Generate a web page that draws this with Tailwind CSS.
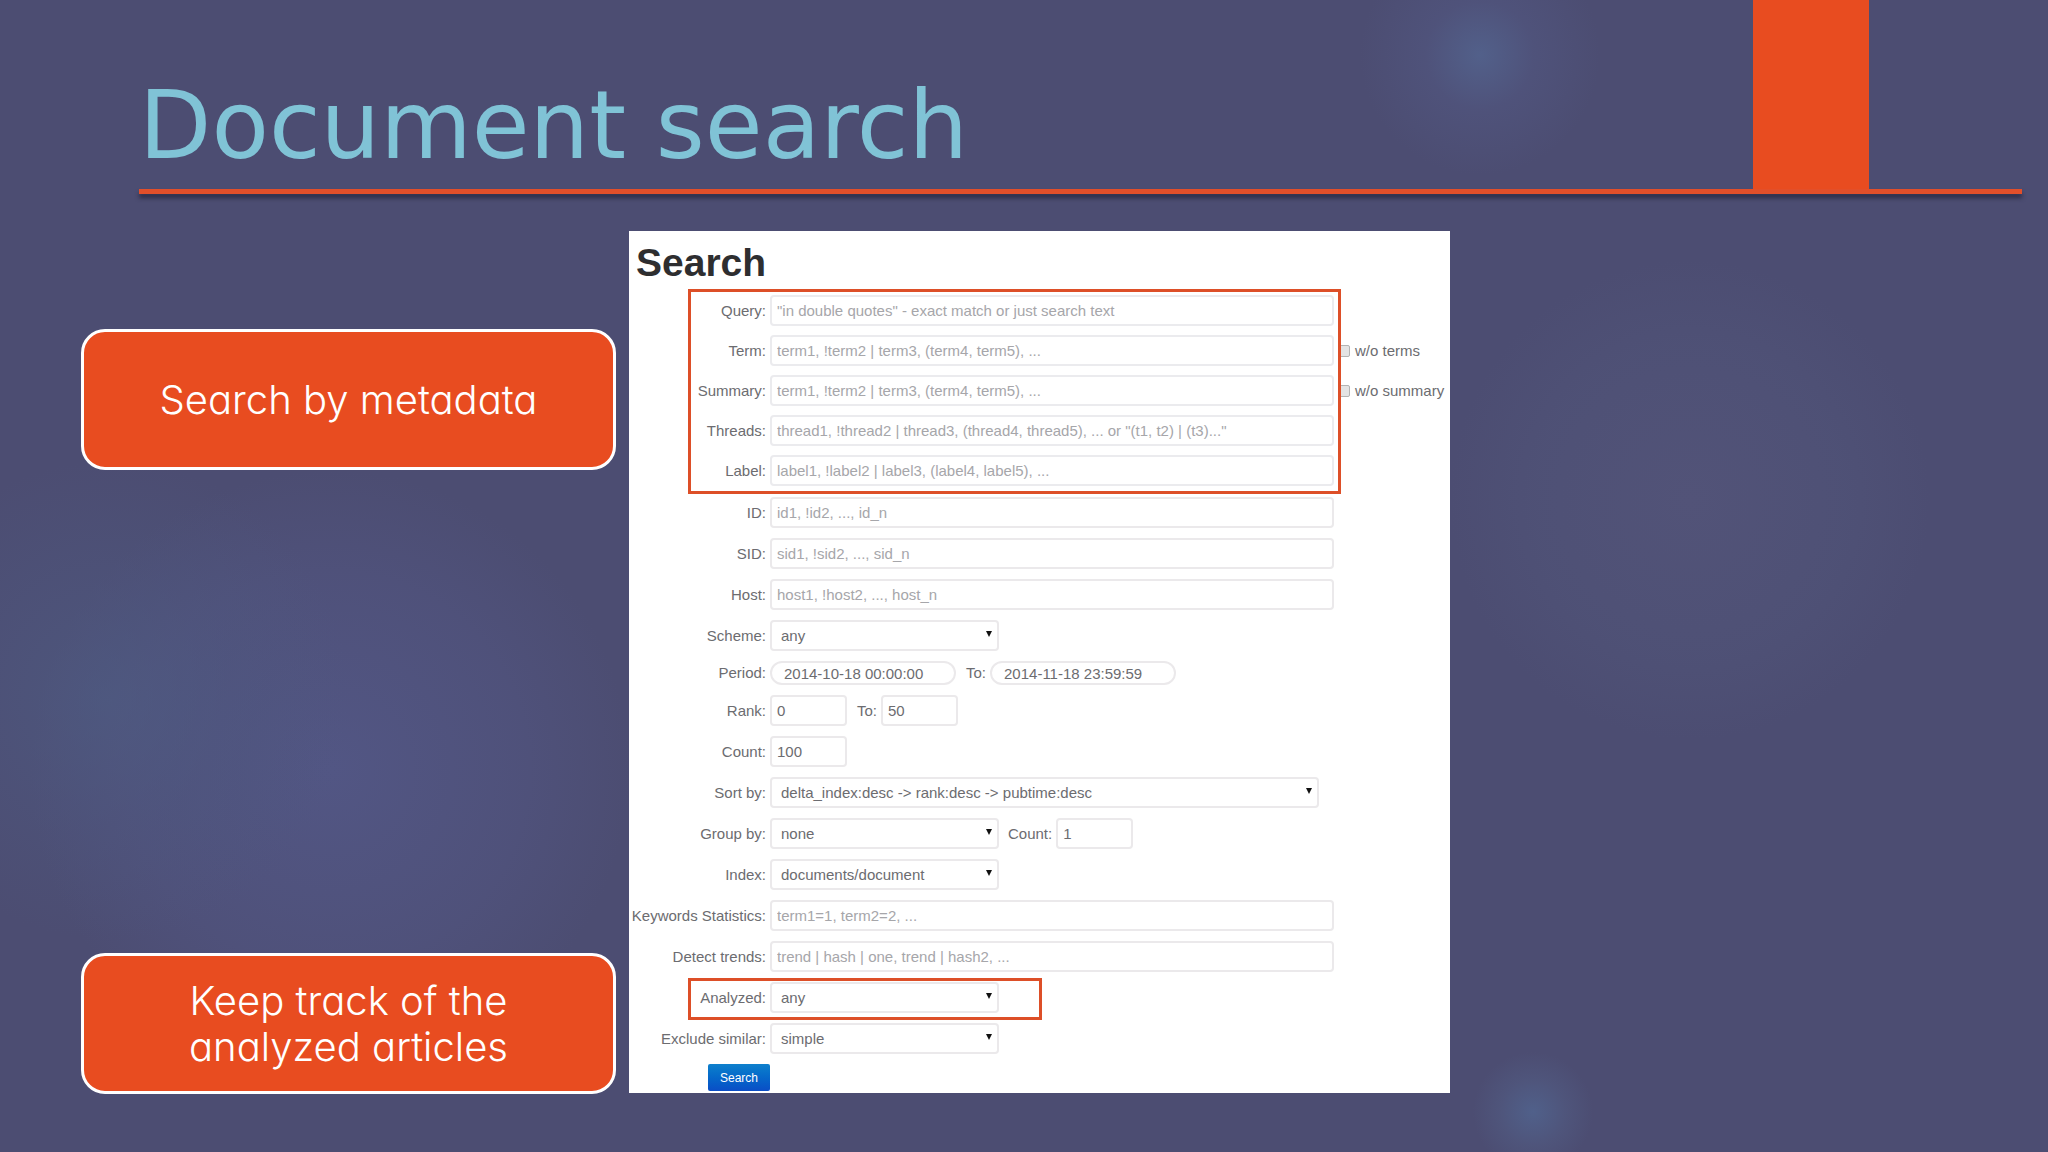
<!DOCTYPE html>
<html lang="en">
<head>
  <meta charset="UTF-8" />
  <meta name="viewport" content="width=device-width, initial-scale=1.0" />
  <title>Document search</title>
  <script src="https://cdn.jsdelivr.net/npm/@tailwindcss/browser@4"></script>
  <style>
    body {
      background-color: #4c4d72;
      background-image:
        radial-gradient(circle 120px at 1480px 55px, #52608a 0, #51568099 45%, transparent 100%),
        radial-gradient(circle 60px at 1533px 1112px, #50608a 0, #50587fb3 55%, transparent 100%),
        radial-gradient(circle 240px at 1690px 500px, #525378 0, #50537899 65%, transparent 100%),
        radial-gradient(circle 240px at 110px 700px, #4e5d8499 0, #4e588066 50%, transparent 100%),
        radial-gradient(circle 300px at 330px 770px, #525684 0, #51548099 65%, transparent 100%);
      background-repeat: no-repeat;
    }
  </style>
</head>
<body class="min-h-screen font-['Liberation_Sans',Arial,sans-serif]">

<header class="ml-[139px] mr-[26px]">
  <div class="flex">
    <h1 class="flex-1 pt-[70px] pb-[7px] text-[94px] leading-[112px] text-[#80c3d6] font-['DejaVu_Sans',Verdana,sans-serif]">Document search</h1>
    <div class="mr-[153px] w-[116px] bg-[#e84c20]"></div>
  </div>
  <div class="h-[5px] bg-[#e24f2a] shadow-[0_4px_4px_rgba(30,30,50,0.7)]"></div>
</header>

<main class="mt-[37px] grid grid-cols-[535fr_821fr_585fr] gap-x-[13px] pl-[81px]">
  <aside class="-mb-px flex flex-col justify-between pt-[98px] text-center text-[40px] leading-[46px] font-light text-white font-[Inter,'Century_Gothic',sans-serif] [font-feature-settings:'cv11']">
    <p class="flex min-h-[141px] items-center justify-center rounded-3xl border-[3px] border-white bg-[#e84c20] px-16">Search by metadata</p>
    <p class="flex min-h-[141px] items-center justify-center rounded-3xl border-[3px] border-white bg-[#e84c20] px-16">Keep track of the<br />analyzed articles</p>
  </aside>

  <form class="bg-white pt-[10px] pb-[2px] text-[15px] leading-[18px] text-[#6c6c70]" onsubmit="return false">
    <h2 class="pl-[7px] text-[39px] leading-[44px] font-bold text-[#2e2e30]">Search</h2>

    <!-- metadata filters -->
    <div class="relative mt-[10px] flex flex-col gap-[9px]">
      <div class="flex items-center gap-1">
        <label for="query" class="w-[137px] shrink-0 text-right">Query:</label>
        <input id="query" type="text" placeholder='"in double quotes" - exact match or just search text' class="h-[31px] min-w-0 flex-1 rounded-sm border-2 border-[#ebebee] px-[5px] placeholder:text-[#a6a6aa]" />
        <div class="w-[112px] shrink-0"></div>
      </div>
      <div class="flex items-center gap-1">
        <label for="term" class="w-[137px] shrink-0 text-right">Term:</label>
        <input id="term" type="text" placeholder="term1, !term2 | term3, (term4, term5), ..." class="h-[31px] min-w-0 flex-1 rounded-sm border-2 border-[#ebebee] px-[5px] placeholder:text-[#a6a6aa]" />
        <label class="flex w-[112px] shrink-0 items-center gap-[5px] whitespace-nowrap"><input type="checkbox" class="size-3 appearance-none rounded-xs border border-[#b4b4b4] bg-[#e4e4e4]" />w/o terms</label>
      </div>
      <div class="flex items-center gap-1">
        <label for="summary" class="w-[137px] shrink-0 text-right">Summary:</label>
        <input id="summary" type="text" placeholder="term1, !term2 | term3, (term4, term5), ..." class="h-[31px] min-w-0 flex-1 rounded-sm border-2 border-[#ebebee] px-[5px] placeholder:text-[#a6a6aa]" />
        <label class="flex w-[112px] shrink-0 items-center gap-[5px] whitespace-nowrap"><input type="checkbox" class="size-3 appearance-none rounded-xs border border-[#b4b4b4] bg-[#e4e4e4]" />w/o summary</label>
      </div>
      <div class="flex items-center gap-1">
        <label for="threads" class="w-[137px] shrink-0 text-right">Threads:</label>
        <input id="threads" type="text" placeholder='thread1, !thread2 | thread3, (thread4, thread5), ... or "(t1, t2) | (t3)..."' class="h-[31px] min-w-0 flex-1 rounded-sm border-2 border-[#ebebee] px-[5px] placeholder:text-[#a6a6aa]" />
        <div class="w-[112px] shrink-0"></div>
      </div>
      <div class="flex items-center gap-1">
        <label for="label" class="w-[137px] shrink-0 text-right">Label:</label>
        <input id="label" type="text" placeholder="label1, !label2 | label3, (label4, label5), ..." class="h-[31px] min-w-0 flex-1 rounded-sm border-2 border-[#ebebee] px-[5px] placeholder:text-[#a6a6aa]" />
        <div class="w-[112px] shrink-0"></div>
      </div>
      <div class="pointer-events-none absolute -top-[6px] right-[109px] -bottom-[8px] left-[59px] border-[3px] border-[#dd4f28]"></div>
    </div>

    <div class="mt-[11px] flex flex-col gap-[10px]">
      <div class="flex items-center gap-1">
        <label for="id" class="w-[137px] shrink-0 text-right">ID:</label>
        <input id="id" type="text" placeholder="id1, !id2, ..., id_n" class="h-[31px] min-w-0 flex-1 rounded-sm border-2 border-[#ebe9eb] px-[5px] placeholder:text-[#a6a6aa]" />
        <div class="w-[112px] shrink-0"></div>
      </div>
      <div class="flex items-center gap-1">
        <label for="sid" class="w-[137px] shrink-0 text-right">SID:</label>
        <input id="sid" type="text" placeholder="sid1, !sid2, ..., sid_n" class="h-[31px] min-w-0 flex-1 rounded-sm border-2 border-[#ebe9eb] px-[5px] placeholder:text-[#a6a6aa]" />
        <div class="w-[112px] shrink-0"></div>
      </div>
      <div class="flex items-center gap-1">
        <label for="host" class="w-[137px] shrink-0 text-right">Host:</label>
        <input id="host" type="text" placeholder="host1, !host2, ..., host_n" class="h-[31px] min-w-0 flex-1 rounded-sm border-2 border-[#ebe9eb] px-[5px] placeholder:text-[#a6a6aa]" />
        <div class="w-[112px] shrink-0"></div>
      </div>
      <div class="flex items-center gap-1">
        <label for="scheme" class="w-[137px] shrink-0 text-right">Scheme:</label>
        <div class="relative w-[229px]">
          <select id="scheme" class="block h-[31px] w-full appearance-none rounded-sm border-2 border-[#ebe9eb] px-[9px]"><option>any</option></select>
          <svg class="pointer-events-none absolute top-[11px] right-[7px] size-[6px]" viewBox="0 0 6 6"><path d="M0 0h6L3 6z" fill="#111" /></svg>
        </div>
      </div>
      <div class="flex items-center gap-1">
        <label for="from" class="w-[137px] shrink-0 text-right">Period:</label>
        <input id="from" type="text" value="2014-10-18 00:00:00" class="h-6 w-[186px] rounded-full border-2 border-[#ebe9eb] px-3" />
        <label for="until" class="ml-[6px]">To:</label>
        <input id="until" type="text" value="2014-11-18 23:59:59" class="h-6 w-[186px] rounded-full border-2 border-[#ebe9eb] px-3" />
      </div>
      <div class="flex items-center gap-1">
        <label for="rank-min" class="w-[137px] shrink-0 text-right">Rank:</label>
        <input id="rank-min" type="text" value="0" class="h-[31px] w-[77px] rounded-sm border-2 border-[#ebe9eb] px-[5px]" />
        <label for="rank-max" class="ml-[6px]">To:</label>
        <input id="rank-max" type="text" value="50" class="h-[31px] w-[77px] rounded-sm border-2 border-[#ebe9eb] px-[5px]" />
      </div>
      <div class="flex items-center gap-1">
        <label for="count" class="w-[137px] shrink-0 text-right">Count:</label>
        <input id="count" type="text" value="100" class="h-[31px] w-[77px] rounded-sm border-2 border-[#ebe9eb] px-[5px]" />
      </div>
      <div class="flex items-center gap-1">
        <label for="sort" class="w-[137px] shrink-0 text-right">Sort by:</label>
        <div class="relative min-w-0 flex-1">
          <select id="sort" class="block h-[31px] w-full appearance-none rounded-sm border-2 border-[#ebe9eb] px-[9px]"><option>delta_index:desc -&gt; rank:desc -&gt; pubtime:desc</option></select>
          <svg class="pointer-events-none absolute top-[11px] right-[7px] size-[6px]" viewBox="0 0 6 6"><path d="M0 0h6L3 6z" fill="#111" /></svg>
        </div>
        <div class="w-[127px] shrink-0"></div>
      </div>
      <div class="flex items-center gap-1">
        <label for="group" class="w-[137px] shrink-0 text-right">Group by:</label>
        <div class="relative w-[229px]">
          <select id="group" class="block h-[31px] w-full appearance-none rounded-sm border-2 border-[#ebe9eb] px-[9px]"><option>none</option></select>
          <svg class="pointer-events-none absolute top-[11px] right-[7px] size-[6px]" viewBox="0 0 6 6"><path d="M0 0h6L3 6z" fill="#111" /></svg>
        </div>
        <label for="group-count" class="ml-[5px]">Count:</label>
        <input id="group-count" type="text" value="1" class="h-[31px] w-[77px] rounded-sm border-2 border-[#ebe9eb] px-[5px]" />
      </div>
      <div class="flex items-center gap-1">
        <label for="index" class="w-[137px] shrink-0 text-right">Index:</label>
        <div class="relative w-[229px]">
          <select id="index" class="block h-[31px] w-full appearance-none rounded-sm border-2 border-[#ebe9eb] px-[9px]"><option>documents/document</option></select>
          <svg class="pointer-events-none absolute top-[11px] right-[7px] size-[6px]" viewBox="0 0 6 6"><path d="M0 0h6L3 6z" fill="#111" /></svg>
        </div>
      </div>
      <div class="flex items-center gap-1">
        <label for="keywords" class="w-[137px] shrink-0 text-right whitespace-nowrap">Keywords Statistics:</label>
        <input id="keywords" type="text" placeholder="term1=1, term2=2, ..." class="h-[31px] min-w-0 flex-1 rounded-sm border-2 border-[#ebe9eb] px-[5px] placeholder:text-[#a6a6aa]" />
        <div class="w-[112px] shrink-0"></div>
      </div>
      <div class="flex items-center gap-1">
        <label for="trends" class="w-[137px] shrink-0 text-right">Detect trends:</label>
        <input id="trends" type="text" placeholder="trend | hash | one, trend | hash2, ..." class="h-[31px] min-w-0 flex-1 rounded-sm border-2 border-[#ebe9eb] px-[5px] placeholder:text-[#a6a6aa]" />
        <div class="w-[112px] shrink-0"></div>
      </div>
      <div class="relative flex items-center gap-1">
        <label for="analyzed" class="w-[137px] shrink-0 text-right">Analyzed:</label>
        <div class="relative w-[229px]">
          <select id="analyzed" class="block h-[31px] w-full appearance-none rounded-sm border-2 border-[#ebe9eb] px-[9px]"><option>any</option></select>
          <svg class="pointer-events-none absolute top-[11px] right-[7px] size-[6px]" viewBox="0 0 6 6"><path d="M0 0h6L3 6z" fill="#111" /></svg>
        </div>
        <div class="pointer-events-none absolute -top-[4px] -bottom-[7px] left-[59px] w-[354px] border-[3px] border-[#dd4f28]"></div>
      </div>
      <div class="flex items-center gap-1">
        <label for="similar" class="w-[137px] shrink-0 text-right">Exclude similar:</label>
        <div class="relative w-[229px]">
          <select id="similar" class="block h-[31px] w-full appearance-none rounded-sm border-2 border-[#ebe9eb] px-[9px]"><option>simple</option></select>
          <svg class="pointer-events-none absolute top-[11px] right-[7px] size-[6px]" viewBox="0 0 6 6"><path d="M0 0h6L3 6z" fill="#111" /></svg>
        </div>
      </div>
      <button type="submit" class="ml-[79px] h-[27px] w-[62px] rounded-xs bg-linear-to-b from-[#0f80cc] to-[#0b4dc6] text-[12px] text-white">Search</button>
    </div>
  </form>
</main>

</body>
</html>
